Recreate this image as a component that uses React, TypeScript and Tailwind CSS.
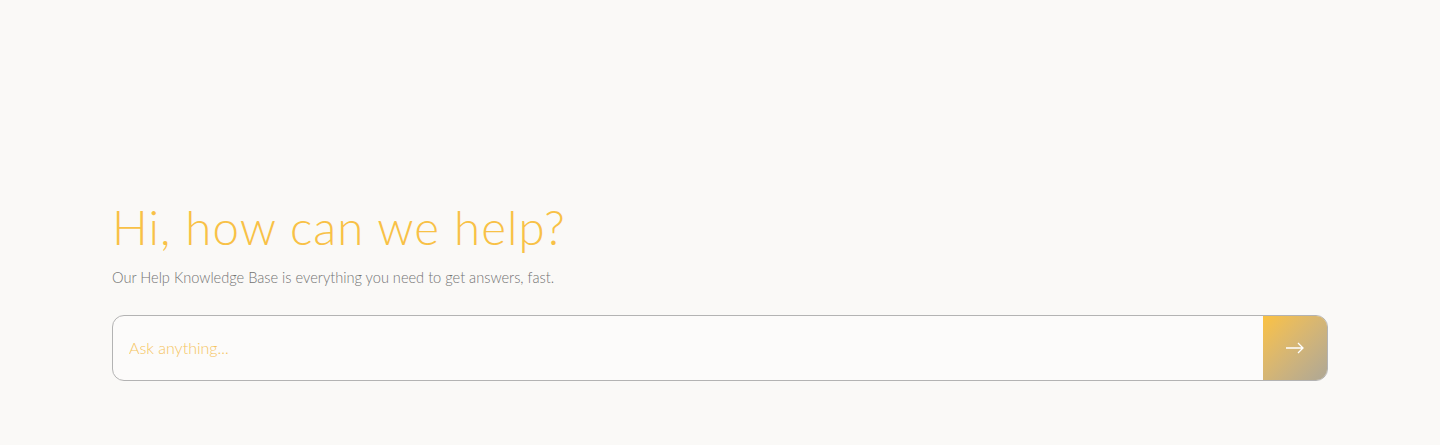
import React from "react";

export default function App() {
  return (
    <div
      className="w-full h-[445px] bg-[#faf9f7] px-[112px] pt-[195px]"
      style={{ fontFamily: "Lato, 'Noto Sans', sans-serif" }}
    >
      {/* Encabezado */}
      <h1 className="text-[47.5px] leading-[64px] font-light tracking-[1px] text-[#f8c146]">
        Hi, how can we help?
      </h1>
      <p className="mt-[7px] text-[14.6px] leading-[24px] font-light text-[#737373]">
        Our Help Knowledge Base is everything you need to get answers, fast.
      </p>

      {/* Buscador */}
      <div className="mt-[25px] flex h-[66px] w-full overflow-hidden rounded-[12px] border border-[#b3b3b3] bg-[#fcfbfa]">
        <input
          type="text"
          placeholder="Ask anything..."
          className="flex-1 bg-transparent px-4 text-[16px] font-light text-gray-700 placeholder-[#f5c460] focus:outline-none"
        />
        <button className="flex w-[64px] items-center justify-center bg-gradient-to-br from-[#fbc23f] to-[#aea795]">
          <svg width="20" height="12" viewBox="0 0 20 12" fill="none" stroke="#fff" strokeWidth="1.3">
            <path d="M1 6h17M13 1l5 5-5 5" />
          </svg>
        </button>
      </div>
    </div>
  );
}
